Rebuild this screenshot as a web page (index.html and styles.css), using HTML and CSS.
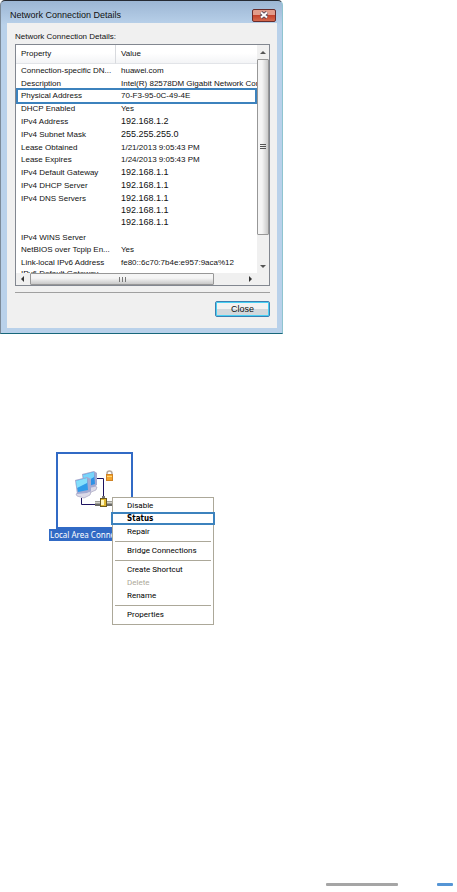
FILE: index.html
```html
<!DOCTYPE html>
<html lang="en">

<head>
  <meta charset="UTF-8">
  <meta name="viewport" content="width=device-width, initial-scale=1.0">
  <title>Network Connection Details</title>

  <link rel="stylesheet" href="styles.css">
</head>

<body>
  <section class="dialog">
    <div class="titleBar">
      <h1>Network Connection Details</h1>
      <button type="button" class="closeIcon" aria-label="Close window">
        <svg width="10" height="8" viewBox="0 0 10 8">
          <path d="M2 1.500L8 6.500M8 1.500L2 6.500" stroke="#5c4a58" stroke-width="3.600" />
          <path d="M2 1.500L8 6.500M8 1.500L2 6.500" stroke="#fff" stroke-width="2" />
        </svg>
      </button>
    </div>

    <div class="client">
      <p class="caption">Network Connection Details:</p>

      <div class="list">
        <div class="view">
          <table>
            <thead>
              <tr>
                <th>Property</th>
                <th>Value</th>
              </tr>
            </thead>
            <tbody>
              <tr><td>Connection-specific DN...</td><td>huawei.com</td></tr>
              <tr><td>Description</td><td>Intel(R) 82578DM Gigabit Network Connection</td></tr>
              <tr class="marked"><td>Physical Address</td><td>70-F3-95-0C-49-4E</td></tr>
              <tr><td>DHCP Enabled</td><td>Yes</td></tr>
              <tr><td>IPv4 Address</td><td class="ip">192.168.1.2</td></tr>
              <tr><td>IPv4 Subnet Mask</td><td class="ip">255.255.255.0</td></tr>
              <tr><td>Lease Obtained</td><td>1/21/2013 9:05:43 PM</td></tr>
              <tr><td>Lease Expires</td><td>1/24/2013 9:05:43 PM</td></tr>
              <tr><td>IPv4 Default Gateway</td><td class="ip">192.168.1.1</td></tr>
              <tr><td>IPv4 DHCP Server</td><td class="ip">192.168.1.1</td></tr>
              <tr class="multi"><td>IPv4 DNS Servers</td><td class="ip">192.168.1.1<br>192.168.1.1<br>192.168.1.1</td></tr>
              <tr><td>IPv4 WINS Server</td><td></td></tr>
              <tr><td>NetBIOS over Tcpip En...</td><td>Yes</td></tr>
              <tr><td>Link-local IPv6 Address</td><td>fe80::6c70:7b4e:e957:9aca%12</td></tr>
              <tr><td>IPv6 Default Gateway</td><td></td></tr>
            </tbody>
          </table>
        </div>

        <div class="vScroll">
          <svg width="12" height="14" viewBox="0 0 12 14"><path d="M3 9L6 6L9 9Z" fill="#555" /></svg>
          <div class="thumb">
            <svg width="6" height="6" viewBox="0 0 6 6"><path d="M0 .5H6M0 2.500H6M0 4.500H6" stroke="#555" /></svg>
          </div>
          <svg class="end" width="12" height="14" viewBox="0 0 12 14"><path d="M3 6H9L6 9Z" fill="#555" /></svg>
        </div>

        <div class="hScroll">
          <svg width="14" height="12" viewBox="0 0 14 12"><path d="M8 3V9L5 6Z" fill="#333" /></svg>
          <div class="thumb">
            <svg width="8" height="5" viewBox="0 0 8 5"><path d="M1.500 0V5M4.500 0V5M7.500 0V5" stroke="#777" /></svg>
          </div>
          <svg class="end" width="14" height="12" viewBox="0 0 14 12"><path d="M6 3L9 6L6 9Z" fill="#333" /></svg>
        </div>
      </div>

      <hr>
      <button type="button" class="closeBtn">Close</button>
    </div>
  </section>

  <section class="desktop">
    <div class="connection">
      <div class="tile">
        <svg width="73" height="73" viewBox="0 0 73 73">
          <path d="M38 24.500H45.500V45M23.500 44V50.500H38" fill="none" stroke="#1c1260" />
          <!-- rear monitor -->
          <path d="M26 35L33 31L39 33L38 36L31 39L27 38Z" fill="#dcdae8" stroke="#9c9ab8" stroke-width=".6" />
          <path d="M24 20L36 17L39 19L39 31L36 33L26 35Z" fill="#a3a9d0" />
          <path d="M25 21L36 18L37 30L27 33Z" fill="#2f92e6" />
          <path d="M25 21L36 18L36 23L26 29Z" fill="#78d4fa" />
          <!-- front monitor -->
          <path d="M18 40L25 36L33 38L32 41L26 44L19 42Z" fill="#dcdae8" stroke="#9c9ab8" stroke-width=".6" />
          <path d="M17 26L29 23L33 25L33 37L29 39L19 40Z" fill="#a3a9d0" />
          <path d="M18 27L29 24L30 36L20 38Z" fill="#2f9cea" />
          <path d="M18 27L29 24L29 29L19 34Z" fill="#84dffb" />
          <!-- padlock -->
          <path d="M49 21V19.500A2.500 2.500 0 0 1 54 19.500V21" fill="none" stroke="#b5aaa0" stroke-width="1.500" />
          <rect x="48.500" y="20.500" width="6" height="6" fill="#f5a52e" stroke="#cf8326" />
          <path d="M49 22.500H54" stroke="#ffd773" />
          <!-- network plug -->
          <path d="M37 49.500H56" stroke="#6b6b66" stroke-width="5" />
          <path d="M37 48.500H56" stroke="#d3d3ca" stroke-width="2" />
          <path d="M45.500 42V46" stroke="#777" stroke-width="3" />
          <rect x="42.500" y="44.500" width="6" height="8" fill="#e0b830" stroke="#6d5a22" />
          <rect x="43" y="46" width="3" height="5" fill="#fff6bd" />
        </svg>
      </div>
      <p class="name">Local Area Connection</p>
    </div>

    <ul class="menu">
      <li><button type="button">Disable</button></li>
      <li class="current"><button type="button">Status</button></li>
      <li><button type="button">Repair</button></li>
      <li class="line"></li>
      <li><button type="button">Bridge Connections</button></li>
      <li class="line"></li>
      <li><button type="button">Create Shortcut</button></li>
      <li><button type="button" disabled>Delete</button></li>
      <li><button type="button">Rename</button></li>
      <li class="line"></li>
      <li><button type="button">Properties</button></li>
    </ul>
  </section>

  <footer>
    <span class="grayBar"></span>
    <span class="blueBar"></span>
  </footer>
</body>

</html>
```
FILE: styles.css
```css
* {
  box-sizing: border-box;
}

body {
  margin: 0;
  min-height: 100vh;
  display: flex;
  flex-direction: column;
  background-color: #fff;
  color: #111;
  font-family: "Liberation Sans", sans-serif;
  font-size: 8px;
}

h1, p, ul {
  margin: 0;
  padding: 0;
}

button {
  padding: 0;
  border: 0;
  background: none;
  color: inherit;
  font: inherit;
}

svg {
  display: block;
}

/* dialog */
.dialog {
  width: 100%;
  max-width: 283px;
  padding: 0 5px 5px 6px;
  border: 1px solid #7c8a98;
  border-top-color: #252a33;
  border-right-color: #8fc4d0;
  border-bottom: 1px solid #17677a;
  border-radius: 5px 5px 0 0;
  background: linear-gradient(#9cb6d4, #b9d1ea 24px, #b9d1ea);
}

.titleBar {
  display: flex;
  justify-content: space-between;
  align-items: center;
  height: 22px;
  padding: 6px 1px 0 3px;
}

.titleBar h1 {
  font-size: 9px;
  font-weight: normal;
}

.closeIcon {
  display: flex;
  justify-content: center;
  align-items: center;
  width: 24px;
  height: 13px;
  border: 1px solid #672c2c;
  border-radius: 2px;
  background: linear-gradient(#e29b8a 45%, #c4432c 50%, #d5694e);
}

.client {
  display: flex;
  flex-direction: column;
  padding: 7px 7px 11px 8px;
  background-color: #f0f0f0;
}

.caption {
  height: 14px;
  line-height: 14px;
}

.list {
  display: grid;
  grid-template-columns: 1fr 12px;
  grid-template-rows: 228px 12px;
  border: 1px solid #828790;
  background-color: #fff;
}

.view {
  overflow: hidden;
}

table {
  width: 100%;
  table-layout: fixed;
  border-collapse: separate;
  border-spacing: 0;
}

th, td {
  padding: 0 0 0 5px;
  text-align: left;
  vertical-align: top;
  white-space: nowrap;
}

th {
  height: 19px;
  line-height: 18px;
  border-bottom: 1px solid #e2e4e8;
  background: linear-gradient(#fff 45%, #f3f4f6);
  font-weight: normal;
}

th:first-child {
  width: 100px;
  border-right: 1px solid #d8dade;
}

td {
  height: 13px;
  line-height: 13px;
}

tbody tr:nth-child(5n + 3) td {
  height: 12px;
  line-height: 12px;
}

tbody tr:last-child td {
  line-height: 9px;
}

.ip {
  font-size: 9px;
}

.multi td {
  height: 39px;
}

.multi .ip {
  line-height: 12px;
}

.marked {
  position: relative;
}

.marked td:first-child::after {
  content: "";
  position: absolute;
  left: 0;
  right: 0;
  top: -2px;
  bottom: -2px;
  border: 2px solid #3c82bd;
}

.vScroll, .hScroll {
  display: flex;
  background-color: #f0f0f0;
}

.vScroll {
  flex-direction: column;
  grid-row: 1 / 3;
  grid-column: 2 / 3;
  padding-bottom: 12px;
}

.hScroll {
  grid-column: 1 / 2;
}

.thumb {
  display: flex;
  justify-content: center;
  align-items: center;
  border: 1px solid #979797;
  border-radius: 1px;
}

.vScroll .thumb {
  height: 176px;
  background: linear-gradient(90deg, #f5f5f5 40%, #c8c8c8);
}

.hScroll .thumb {
  width: 184px;
  background: linear-gradient(#f5f5f5 40%, #c8c8c8);
}

.vScroll .end {
  margin-top: auto;
}

.hScroll .end {
  margin-left: auto;
}

hr {
  width: 100%;
  margin: 6px 0 8px;
  border: 0;
  border-top: 1px solid #a0a0a0;
}

.closeBtn {
  align-self: flex-end;
  width: 55px;
  height: 16px;
  border: 1px solid #3c7fb1;
  border-radius: 2px;
  background: linear-gradient(#f2f2f2 50%, #d2d8dc 50%);
  box-shadow: inset 0 0 0 1px #48d0f4;
  font-size: 9px;
}

/* network icon with its context menu */
.desktop {
  position: relative;
  margin: 118px 0 0 49px;
}

.connection {
  display: flex;
  flex-direction: column;
  align-items: center;
  width: 91px;
}

.tile {
  border: 2px solid #316ac5;
}

.name {
  width: 100%;
  height: 12px;
  padding-left: 1px;
  font-family: "Noto Sans", sans-serif;
  line-height: 12px;
  overflow: hidden;
  white-space: nowrap;
  background-color: #316ac5;
  color: #fff;
}

.menu {
  position: absolute;
  left: 63px;
  top: 45px;
  width: 102px;
  padding: 1px 0 3px;
  border: 1px solid #aca899;
  background-color: #fff;
  color: #000;
  font-family: Roboto, sans-serif;
  list-style: none;
}

.menu button {
  display: block;
  width: 100%;
  height: 13px;
  padding-left: 14px;
  line-height: 13px;
  text-align: left;
}

.menu button:disabled {
  color: #aca899;
}

.menu .current {
  margin: 0 -2px;
  font-family: "DejaVu Sans Condensed", "DejaVu Sans", sans-serif;
  font-weight: bold;
}

.menu .current button {
  border: 2px solid #3c82bd;
  line-height: 9px;
}

.menu .line {
  height: 1px;
  margin: 3px 2px 2px;
  background-color: #aca899;
}

/* bottom bars */
footer {
  display: flex;
  justify-content: flex-end;
  gap: 39px;
  margin-top: auto;
  padding: 0 4px 6px;
}

footer span {
  height: 3px;
  border-radius: 1px;
}

.grayBar {
  width: 72px;
  background-color: #a5a5a5;
}

.blueBar {
  width: 16px;
  background-color: #5595d5;
}
```
